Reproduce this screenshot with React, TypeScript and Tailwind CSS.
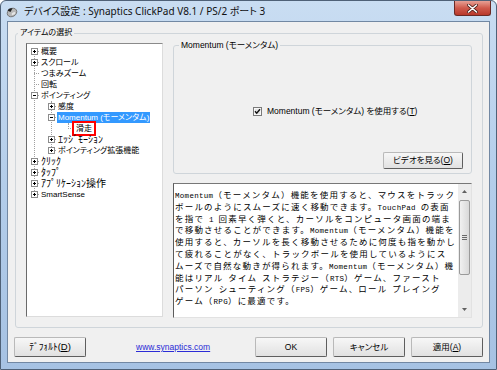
import React from "react";

const UI = "[font-family:'Liberation_Sans','Noto_Sans_CJK_JP',sans-serif] [font-feature-settings:'palt']";

type Kind = "plus" | "minus" | "none";

function Connector({ kind }: { kind: Kind }) {
  return (
    <svg width="10" height="11" viewBox="0 0 10 11" className="shrink-0" shapeRendering="crispEdges">
      <line x1="4" y1="5.5" x2="10" y2="5.5" stroke="#a0a0a0" strokeWidth="1" strokeDasharray="1 1" />
      {kind !== "none" && (
        <>
          <rect x="1.5" y="2.5" width="6" height="6" fill="#ffffff" stroke="#8c8c8c" strokeWidth="1" />
          <line x1="3" y1="5.5" x2="6" y2="5.5" stroke="#000" strokeWidth="1" />
          {kind === "plus" && <line x1="4.5" y1="4" x2="4.5" y2="7" stroke="#000" strokeWidth="1" />}
        </>
      )}
    </svg>
  );
}

function TreeRow({
  level,
  kind,
  label,
  selected,
  marked,
  half,
}: {
  level: 0 | 1 | 2;
  kind: Kind;
  label: string;
  selected?: boolean;
  marked?: boolean;
  half?: boolean;
}) {
  const indent = level === 0 ? "pl-[3px]" : level === 1 ? "pl-[20px]" : "pl-[37px]";
  const size = half ? "text-[10px] [font-feature-settings:normal]" : "text-[8px]";
  let labelCls = `px-[1px] leading-[11px] whitespace-nowrap text-black ${size}`;
  if (selected) labelCls = `px-[1px] leading-[11px] whitespace-nowrap bg-[#3399ff] text-white ${size}`;
  if (marked)
    labelCls = `px-[2px] leading-[11px] whitespace-nowrap text-black bg-white outline-2 outline-solid outline-[#ff0000] ${size}`;
  return (
    <div className={`relative flex items-center h-[11px] ${indent}`}>
      <Connector kind={kind} />
      <span className={labelCls}>{label}</span>
    </div>
  );
}

function Latinize({ text }: { text: string }) {
  const parts = text.split(/([\x20-\x7e]+)/).filter((p) => p.length > 0);
  return (
    <>
      {parts.map((p, i) =>
        /^[\x20-\x7e]+$/.test(p) ? (
          <span
            key={i}
            className="text-[7.5px] tracking-[0.3px] [font-family:'Liberation_Mono',monospace]"
          >
            {p}
          </span>
        ) : (
          <span key={i}>{p}</span>
        )
      )}
    </>
  );
}

const desc = [
  "Momentum（モーメンタム）機能を使用すると、マウスをトラック",
  "ボールのようにスムーズに速く移動できます。TouchPad の表面",
  "を指で 1 回素早く弾くと、カーソルをコンピュータ画面の端ま",
  "で移動させることができます。Momentum（モーメンタム）機能を",
  "使用すると、カーソルを長く移動させるために何度も指を動かし",
  "て疲れることがなく、トラックボールを使用しているようにス",
  "ムーズで自然な動きが得られます。Momentum（モーメンタム）機",
  "能はリアル タイム ストラテジー（RTS）ゲーム、ファースト",
  "パーソン シューティング（FPS）ゲーム、ロール プレイング",
  "ゲーム（RPG）に最適です。",
];

function WinButton({ children, className = "" }: { children: React.ReactNode; className?: string }) {
  return (
    <div
      className={`flex items-center justify-center rounded-[2px] border border-t-[#b9b9b9] border-l-[#b9b9b9] border-b-[#5e5e5e] border-r-[#5e5e5e] bg-gradient-to-b from-[#f7f7f7] to-[#e1e1e1] leading-none text-black ${className}`}
    >
      {children}
    </div>
  );
}

export default function App() {
  return (
    <div className={`w-[497px] h-[370px] overflow-hidden rounded-t-[6px] border border-[#4f6177] bg-gradient-to-b from-[#c9ddf2] via-[#b3cdea] to-[#a6c2e3] ${UI}`}>
      {/* Title bar */}
      <div className="flex h-[20px] items-center pl-[4px]">
        <svg width="13" height="13" viewBox="0 0 13 13" className="shrink-0">
          <ellipse cx="7" cy="7.5" rx="5" ry="4" fill="#b8b8b8" stroke="#6d6d6d" strokeWidth="0.8" transform="rotate(-30 7 7.5)" />
          <path d="M2.5 5.5 Q4 2.5 7.5 3.3 L5.5 7 Z" fill="#1e1e1e" />
          <ellipse cx="8.5" cy="8.5" rx="2" ry="1.2" fill="#e6e6e6" transform="rotate(-30 8.5 8.5)" />
        </svg>
        <div className="ml-[6px] text-[10px] leading-none text-[#101010] whitespace-nowrap [font-family:'Noto_Sans','Noto_Sans_CJK_JP',sans-serif]">
          デバイス設定 : Synaptics ClickPad V8.1 / PS/2 ポート 3
        </div>
        <div className="ml-auto mr-[5px] self-start flex h-[15px] w-[37px] items-center justify-center rounded-b-[3px] border border-t-0 border-[#6b2a25] bg-gradient-to-b from-[#e6a095] via-[#cf5a4c] to-[#b8382b]">
          <svg width="11" height="9" viewBox="0 0 11 9">
            <path d="M1.5 1 L9.5 8 M9.5 1 L1.5 8" stroke="#4a1d18" strokeWidth="3" strokeLinecap="round" />
            <path d="M1.5 1 L9.5 8 M9.5 1 L1.5 8" stroke="#ffffff" strokeWidth="1.6" strokeLinecap="round" />
          </svg>
        </div>
      </div>

      {/* Client area */}
      <div className="mx-[6px] h-[342px] border border-[#7288a3] bg-[#f0f0f0]">
        <fieldset className="ml-[7px] mt-[5px] h-[301px] w-[468px] rounded-[3px] border border-[#cfd5da] pl-[2px]">
          <legend className="px-[2px] text-[8px] leading-[12px] text-black">アイテムの選択</legend>
          <div className="flex items-start">
            {/* Tree */}
            <div className="ml-[8px] mt-[4px] h-[274px] w-[137px] shrink-0 border border-[#dcdcdc] border-l-[#6a6a6a] border-t-[#8a8a8a] bg-white">
              <div className="relative pt-[2px]">
                <div className="absolute left-[7px] top-[8px] h-[143px] w-0 border-l border-dotted border-[#a0a0a0]" />
                <div className="absolute left-[24px] top-[57px] h-[50px] w-0 border-l border-dotted border-[#a0a0a0]" />
                <div className="absolute left-[41px] top-[79px] h-[6px] w-0 border-l border-dotted border-[#a0a0a0]" />
                <TreeRow level={0} kind="plus" label="概要" />
                <TreeRow level={0} kind="plus" label="スクロール" />
                <TreeRow level={0} kind="none" label="つまみズーム" />
                <TreeRow level={0} kind="none" label="回転" />
                <TreeRow level={0} kind="minus" label="ポインティング" />
                <TreeRow level={1} kind="plus" label="感度" />
                <TreeRow level={1} kind="minus" label="Momentum (モーメンタム)" selected />
                <TreeRow level={2} kind="none" label="滑走" marked />
                <TreeRow level={1} kind="plus" label="ｴｯｼﾞﾓｰｼｮﾝ" half />
                <TreeRow level={1} kind="plus" label="ポインティング拡張機能" />
                <TreeRow level={0} kind="plus" label="ｸﾘｯｸ" half />
                <TreeRow level={0} kind="plus" label="ﾀｯﾌﾟ" half />
                <TreeRow level={0} kind="plus" label="ｱﾌﾟﾘｹｰｼｮﾝ操作" half />
                <TreeRow level={0} kind="plus" label="SmartSense" />
              </div>
            </div>

            {/* Right column */}
            <div className="ml-[10px] flex w-[299px] flex-col">
              <fieldset className="h-[135px] rounded-[3px] border border-[#cfd5da] pl-[5px]">
                <legend className="px-[2px] text-[8.5px] leading-[12px] text-black whitespace-nowrap">
                  Momentum (モーメンタム)
                </legend>
                <div className="ml-[74px] mt-[54px] flex h-[12px] items-center gap-[5px]">
                  <svg width="9" height="9" viewBox="0 0 9 9" className="shrink-0" shapeRendering="crispEdges">
                    <rect x="0.5" y="0.5" width="8" height="8" fill="#f4f4f4" stroke="#7a7a7a" />
                    <rect x="1.5" y="1.5" width="6" height="6" fill="#e3e3e3" stroke="#f8f8f8" />
                    <path d="M2 4.3 L3.7 6.2 L7 2.3" fill="none" stroke="#111" strokeWidth="1.4" shapeRendering="auto" />
                  </svg>
                  <span className="text-[8.5px] leading-none text-black whitespace-nowrap">
                    Momentum (モーメンタム) を使用する(<span className="underline">T</span>)
                  </span>
                </div>
                <div className="mr-[8px] mt-[35px] flex justify-end">
                  <WinButton className="h-[17px] w-[80px] text-[8.5px]">
                    ビデオを見る(<span className="underline">O</span>)
                  </WinButton>
                </div>
              </fieldset>

              {/* Description box */}
              <div className="mt-[9px] flex h-[135px] w-[299px] border border-[#e2e2e2] border-l-[#5c5c5c] border-t-[#777777] bg-white">
                <div className="flex-1 overflow-hidden pl-[1px] pt-[5px] text-[8.5px] tracking-[1.2px] text-black [font-family:'Noto_Sans_CJK_JP',sans-serif] [font-feature-settings:normal]">
                  {desc.map((line, i) => (
                    <div key={i} className="h-[11.8px] leading-[11.8px] whitespace-pre">
                      <Latinize text={line} />
                    </div>
                  ))}
                </div>
                <div className="flex w-[13px] shrink-0 flex-col bg-[#ececec]">
                  <div className="flex h-[15px] items-center justify-center">
                    <svg width="5" height="3" viewBox="0 0 5 3">
                      <path d="M0 3 L2.5 0 L5 3 Z" fill="#606060" />
                    </svg>
                  </div>
                  <div className="mx-[1px] mt-[1px] flex h-[75px] items-center justify-center rounded-[2px] border border-[#9a9a9a] bg-gradient-to-r from-[#f1f1f1] to-[#d9d9d9]">
                    <svg width="5" height="5" viewBox="0 0 5 5" shapeRendering="crispEdges">
                      <path d="M0 0.5 H5 M0 2.5 H5 M0 4.5 H5" stroke="#6a6a6a" strokeWidth="1" />
                    </svg>
                  </div>
                  <div className="flex-1" />
                  <div className="flex h-[15px] items-center justify-center">
                    <svg width="5" height="3" viewBox="0 0 5 3">
                      <path d="M0 0 L2.5 3 L5 0 Z" fill="#606060" />
                    </svg>
                  </div>
                </div>
              </div>
            </div>
          </div>
        </fieldset>

        {/* Bottom row */}
        <div className="mt-[9px] flex items-center">
          <WinButton className="ml-[6px] h-[20px] w-[72px] text-[9.5px] [font-feature-settings:normal]">
            ﾃﾞﾌｫﾙﾄ(<span className="underline">D</span>)
          </WinButton>
          <span className="ml-[50px] text-[8.5px] leading-none text-[#2b2bd6] underline">www.synaptics.com</span>
          <div className="ml-auto mr-[6px] flex gap-[6px]">
            <WinButton className="h-[20px] w-[72px] text-[8.5px]">OK</WinButton>
            <WinButton className="h-[20px] w-[72px] text-[8.5px]">キャンセル</WinButton>
            <WinButton className="h-[20px] w-[72px] text-[8.5px]">
              適用(<span className="underline">A</span>)
            </WinButton>
          </div>
        </div>
      </div>
    </div>
  );
}
